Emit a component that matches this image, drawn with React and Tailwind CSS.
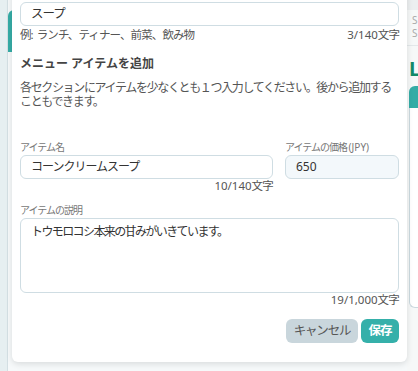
const jp = "font-['Segoe_UI','Noto_Sans','Noto_Sans_CJK_JP',sans-serif]";

function Counter({ num }) {
  return (
    <div className="text-right text-[11.5px] leading-[14px] tracking-[-0.8px] text-[#555]">
      <span className="tracking-normal">{num}</span>文字
    </div>
  );
}

function Label({ children }) {
  return <div className="mb-[1px] text-[10px] leading-[13px] tracking-[-1px] text-[#777]">{children}</div>;
}

export default function App() {
  return (
    <div className={`relative flex h-[371px] w-[418px] overflow-hidden bg-[#e6eff1] ${jp}`}>
      {/* background page */}
      <div className="w-[7px] shrink-0" />
      <div className="flex w-[400px] shrink-0 flex-col border-l border-[#d3dfe3] bg-[#f6f9fa] pt-[10px]">
        <div className="h-[42px] rounded-tl-md bg-[#35aca6]" />
      </div>
      <div className="flex flex-1 flex-col bg-[#f6f8f8]">
        <div className="h-[10px] bg-[#eceff0]" />
        <div className="pl-[5px] pt-[4px] text-[10px] leading-[13px] text-[#aaa]">
          <div>S</div>
          <div>S</div>
        </div>
        <div className="mt-[5px] h-px bg-[#e3e8ea]" />
        <div className="pl-[2px] pt-[12px] text-[20px] font-bold leading-[22px] text-[#138a6a]">L</div>
        <div className="ml-[2px] mt-[6px] flex flex-col">
          <div className="h-[22px] rounded-tl-md bg-[#35aca6]" />
          <div className="h-[200px] rounded-bl-md border-b border-l border-[#cbd9df] bg-white" />
        </div>
      </div>

      {/* modal card */}
      <div className="absolute left-[12px] top-[-22px] w-[395px] rounded-md bg-white px-[8px] pb-[19px] pt-[10px] shadow-[0_2px_6px_rgba(0,0,0,0.12)]">
        <Label>セクション名</Label>
        <div className="flex h-[24px] items-center rounded-md border border-[#cfdde3] bg-white px-[10px] text-[12.5px] tracking-[-1px] text-[#333]">
          スープ
        </div>
        <div className="mt-[2px] flex justify-between text-[11.5px] leading-[14px] tracking-[-0.9px] text-[#555]">
          <span>
            例<span className="tracking-normal">: </span>ランチ、ティナー、前菜、飲み物
          </span>
          <span>
            <span className="tracking-normal">3/140</span>文字
          </span>
        </div>

        <div className="mt-[14px] text-[12px] font-bold leading-[16px] text-[#444]">メニュー アイテムを追加</div>
        <div className="mt-[9px] text-[12px] leading-[14px] tracking-[-1.35px] text-[#555]">
          <div>各セクションにアイテムを少なくとも１つ入力してください。後から追加する</div>
          <div>こともできます。</div>
        </div>

        <div className="mt-[32px] flex gap-[12px]">
          <div className="w-[253px]">
            <Label>アイテム名</Label>
            <div className="flex h-[24px] items-center rounded-md border border-[#cfdde3] bg-white px-[10px] text-[12px] tracking-[-1px] text-[#333]">
              コーンクリームスープ
            </div>
            <Counter num="10/140" />
          </div>
          <div className="flex-1">
            <Label>
              アイテムの価格 <span className="tracking-normal">(JPY)</span>
            </Label>
            <div className="flex h-[24px] items-center rounded-md border border-[#cfdde3] bg-[#f3f8fb] px-[10px] text-[12px] text-[#333]">
              650
            </div>
          </div>
        </div>

        <div className="mt-[11px]">
          <Label>アイテムの説明</Label>
          <div className="h-[75px] rounded-md border border-[#cfdde3] bg-white px-[10px] pt-[5px] text-[12px] leading-[16px] tracking-[-1.6px] text-[#333]">
            トウモロコシ本来の甘みがいきています。
          </div>
          <Counter num="19/1,000" />
        </div>

        <div className="mt-[12px] flex justify-end gap-[3px]">
          <button className="h-[24px] w-[72px] rounded-md bg-[#c9d6dc] text-[12.5px] tracking-[-1.2px] text-[#555]">キャンセル</button>
          <button className="h-[24px] w-[38px] rounded-md bg-[#35b0aa] text-[12.5px] font-bold tracking-[-1px] text-white">保存</button>
        </div>
      </div>
    </div>
  );
}
